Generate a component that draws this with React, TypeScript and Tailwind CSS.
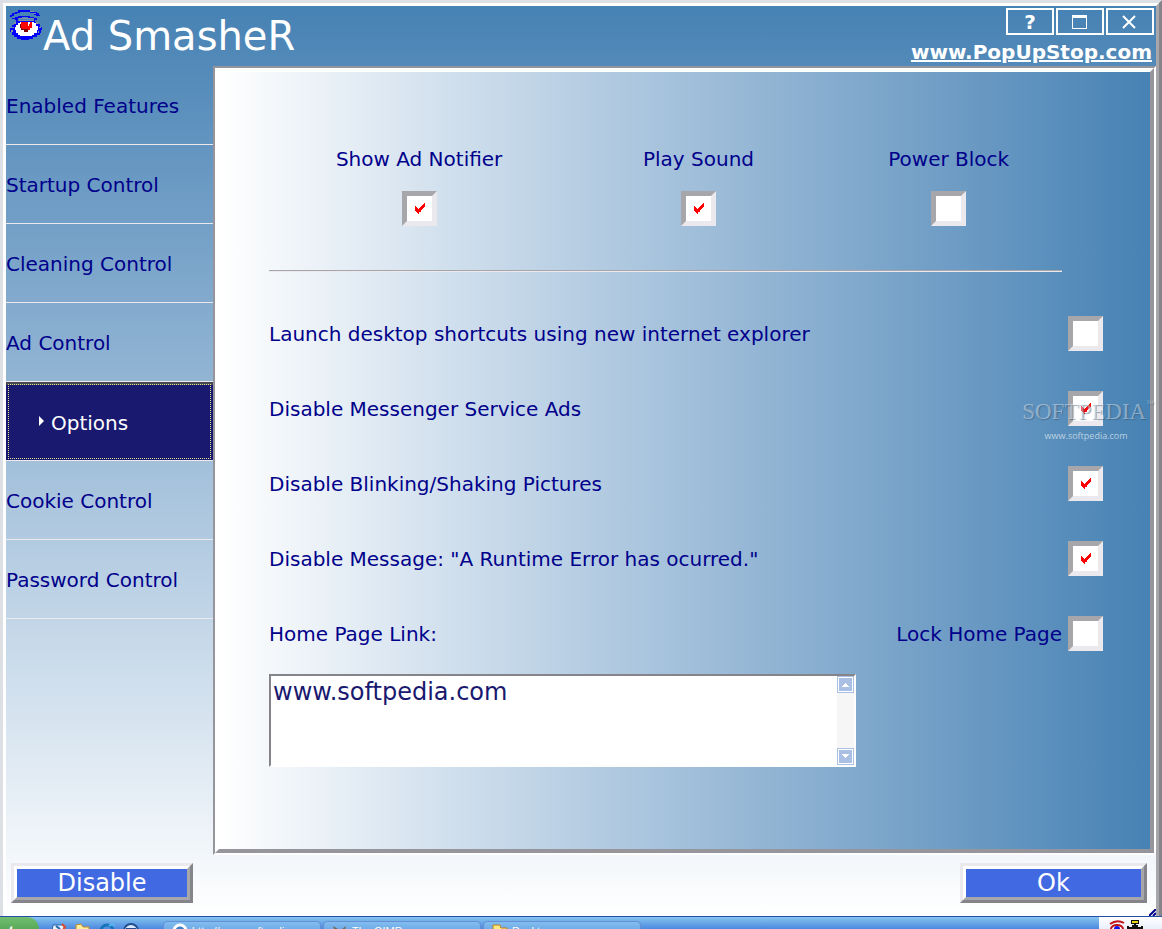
import { useState } from 'react';
import clsx from 'clsx';

const navItems = [
  'Enabled Features',
  'Startup Control',
  'Cleaning Control',
  'Ad Control',
  'Options',
  'Cookie Control',
  'Password Control',
];

function EyeLogo() {
  return (
    <svg className="h-8 w-8 shrink-0" viewBox="0 0 32 32" shapeRendering="crispEdges" aria-hidden="true">
      <path d="M0 5H2V3H5V2H8V0H20V1H24V2H27V3H29V5H30V6H26V5H24V3H20V2H10V3H7V4H4V6H2V7H0Z" fill="#0000ff" />
      <path d="M5 7H8V6H20V7H24V8H27V10H24V8H18V7H12V8H8V10H5V9H2V8H5Z" fill="#0000ff" />
      <path d="M20 1H24V2H20ZM24 3H26V4H24ZM9 8H24V9H9Z" fill="#8790a0" />
      <path d="M6 10H25V12H28V14H30V17H32V20H31V23H30V25H27V27H23V29H19V30H11V29H7V27H4V25H2V22H0V18H2V15H4V12H6Z" fill="#0000ff" />
      <path d="M8 10H24V11H8ZM4 12H6V14H4ZM2 17H4V18H2ZM1 20H3V22H1ZM26 12H28V14H26ZM29 17H31V18H29ZM28 21H29V23H28Z" fill="#8790a0" />
      <path d="M8 13H10V12H24V13H26V16H28V20H27V23H24V25H22V26H10V25H8V23H6V20H5V17H6V15H8Z" fill="#fff" />
      <path d="M10 14H12V18H14V20H18V22H14V20H11V18H10Z" fill="#800000" />
      <path d="M11 12H22V18H20V20H12V18H11Z" fill="#ff0000" />
      <path d="M12 19H18V22H14V20H12Z" fill="#800000" />
      <path d="M18 12H20V14H19V16H18Z" fill="#fff" />
    </svg>
  );
}

function TitleButtons() {
  const frame = 'flex h-[27px] w-12 items-center justify-center border-2 border-white text-white';
  return (
    <div className="flex gap-0.5">
      <button className={frame} aria-label="Help">
        <span className="text-[20px] leading-5 font-bold">?</span>
      </button>
      <button className={frame} aria-label="Maximize">
        <svg className="h-4 w-4" viewBox="0 0 16 16" shapeRendering="crispEdges">
          <path d="M0 1H15V15H0ZM1 4V14H14V4Z" fill="currentColor" fillRule="evenodd" />
        </svg>
      </button>
      <button className={frame} aria-label="Close">
        <svg className="h-4 w-4" viewBox="0 0 16 16">
          <path d="M1 2L13 14M13 2L1 14" stroke="currentColor" strokeWidth="2" />
        </svg>
      </button>
    </div>
  );
}

function CheckBox({ id, defaultChecked }: { id: string; defaultChecked?: boolean }) {
  return (
    <span className="grid size-[35px] shrink-0">
      <input
        id={id}
        type="checkbox"
        defaultChecked={defaultChecked}
        className="peer col-start-1 row-start-1 size-[35px] appearance-none border-5 border-t-[#a7a6aa] border-r-[#ece9ee] border-b-[#ece9ee] border-l-[#a7a6aa] bg-white"
      />
      <svg
        className="pointer-events-none invisible col-start-1 row-start-1 h-[11px] w-[11px] place-self-center peer-checked:visible"
        viewBox="0 0 11 11"
        shapeRendering="crispEdges"
      >
        <path d="M1 3H2V4H3V5H4V6H5V5H6V4H7V3H8V2H9V1H10V0H11V4H10V5H9V6H8V7H7V8H6V9H5V11H4V10H3V9H2V8H1Z" fill="#ff0000" />
        <path d="M5 6H7V9H5Z" fill="#ff0000" />
      </svg>
    </span>
  );
}

const toggles = [
  { id: 'notifier', label: 'Show Ad Notifier', checked: true, width: 'w-[36%]' },
  { id: 'sound', label: 'Play Sound', checked: true, width: 'w-[31%]' },
  { id: 'power', label: 'Power Block', checked: false, width: 'w-[29%]' },
];

const options = [
  { id: 'launch', label: 'Launch desktop shortcuts using new internet explorer', checked: false },
  { id: 'messenger', label: 'Disable Messenger Service Ads', checked: true },
  { id: 'blinking', label: 'Disable Blinking/Shaking Pictures', checked: true },
  { id: 'runtime', label: 'Disable Message: "A Runtime Error has ocurred."', checked: true },
];

function ScrollArrow({ down }: { down?: boolean }) {
  return (
    <button className="flex h-[17px] w-[17px] items-center justify-center border border-[#a9c0e4] bg-white p-px" aria-label={down ? 'Scroll down' : 'Scroll up'}>
      <svg className={clsx('h-full w-full bg-[#a9c0e4]', down && 'rotate-180')} viewBox="0 0 13 13" shapeRendering="crispEdges">
        <path d="M6 5H7V6H8V7H9V8H10V9H3V8H4V7H5V6H6Z" fill="#fff" />
      </svg>
    </button>
  );
}

function Watermark() {
  return (
    <div className="pointer-events-none absolute top-[332px] right-0 text-center text-white/40 select-none">
      <div className="flex items-start font-['Liberation_Serif',serif] text-[23px] leading-6 [text-shadow:1px_1px_1px_#33557088]">
        SOFTPEDIA<span className="text-[8px] leading-2">™</span>
      </div>
      <div className="pr-1 font-['Open_Sans',sans-serif] text-[9px] leading-6 text-white/60">www.softpedia.com</div>
    </div>
  );
}

function OptionsPanel() {
  return (
    <main className="relative flex-1 border-2 border-t-[#96959b] border-r-white border-b-white border-l-[#96959b] bg-white">
      <div className="h-full border-4 border-t-white border-r-[#96959b] border-b-[#96959b] border-l-white bg-linear-to-r from-white to-[#4682b4] pt-[73px] pr-[47px] pl-[50px] text-[#00008b]">
        <div className="flex">
          {toggles.map((t) => (
            <div key={t.id} className={clsx('flex flex-col items-center gap-[18px]', t.width)}>
              <label htmlFor={t.id} className="text-[20px] leading-7">{t.label}</label>
              <CheckBox id={t.id} defaultChecked={t.checked} />
            </div>
          ))}
        </div>
        <hr className="mt-11 mr-[41px] border-t border-b border-t-[#a7a6aa] border-b-[#ece9ee]" />
        <div className="flex flex-col gap-10 pt-11">
          {options.map((o) => (
            <div key={o.id} className="flex items-center justify-between">
              <label htmlFor={o.id} className="text-[20px] leading-7">{o.label}</label>
              <CheckBox id={o.id} defaultChecked={o.checked} />
            </div>
          ))}
          <div className="flex items-center justify-between">
            <label htmlFor="homepage" className="text-[20px] leading-7">Home Page Link:</label>
            <div className="flex items-center gap-1.5">
              <label htmlFor="lock" className="text-[20px] leading-7">Lock Home Page</label>
              <CheckBox id="lock" />
            </div>
          </div>
        </div>
        <div className="mt-[23px] flex h-[93px] w-[74%] max-w-[587px] border-2 border-t-[#85848a] border-r-white border-b-white border-l-[#85848a] bg-white">
          <textarea
            id="homepage"
            defaultValue="www.softpedia.com"
            className="flex-1 resize-none overflow-hidden px-0.5 text-2xl leading-8 text-[#191970] outline-none"
          />
          <div className="flex flex-col justify-between bg-[#f6f6f6]">
            <ScrollArrow />
            <ScrollArrow down />
          </div>
        </div>
      </div>
      <Watermark />
    </main>
  );
}

function ActionButton({ children, className }: { children: string; className: string }) {
  return (
    <button
      className={clsx(
        'h-10 border-3 border-t-[#ece9ee] border-r-[#85848a] border-b-[#85848a] border-l-[#ece9ee] text-2xl leading-7 text-white',
        className,
      )}
    >
      <span className="flex h-full items-center justify-center border-3 border-t-white border-r-[#a7a6aa] border-b-[#a7a6aa] border-l-white bg-[#4169e1]">
        {children}
      </span>
    </button>
  );
}

function TaskButton({ icon, children }: { icon: React.ReactNode; children: string }) {
  return (
    <button className="flex h-6 w-[158px] shrink-0 items-start gap-1 overflow-hidden rounded-t-sm border border-[#668fd6] bg-linear-to-b from-[#82beee] to-[#4c84dc] pt-px pl-2 text-left text-[11px] leading-4 text-white">
      {icon}
      <span className="truncate">{children}</span>
    </button>
  );
}

function TaskBar() {
  return (
    <footer className="h-[13px] overflow-hidden border-t border-[#244fa5] bg-linear-to-b from-[#86c4ef] to-[#4c88df]">
      <div className="flex h-8 items-start font-['Liberation_Sans',sans-serif]">
        <button className="h-8 w-[39px] shrink-0 overflow-hidden rounded-tr-xl bg-linear-to-b from-[#71bd71] to-[#2e8b2e] text-left text-lg leading-6 font-bold text-white italic">rt</button>
        <div className="flex w-[124px] gap-2 pt-1.5 pl-3">
          <svg className="h-4 w-4" viewBox="0 0 16 16"><path d="M2 2H13V14H0Z" fill="#e8f3ff" stroke="#2367a8" /><path d="M5 3L9 6" stroke="#2367a8" strokeWidth="2" /><path d="M11 1L14 4L9 11" stroke="#e04b28" strokeWidth="2" fill="none" /></svg>
          <svg className="h-4 w-4" viewBox="0 0 16 16"><path d="M1 2L6 1L8 4H14V14H1Z" fill="#fff0a0" stroke="#c48a25" /></svg>
          <svg className="h-4 w-4" viewBox="0 0 16 16"><circle cx="8" cy="8" r="6" fill="none" stroke="#1674b9" strokeWidth="3" /><path d="M10 3Q14 0 15 3" fill="none" stroke="#58b7ee" strokeWidth="2" /></svg>
          <svg className="h-4 w-4" viewBox="0 0 16 16"><circle cx="8" cy="8" r="7" fill="#d8eaff" stroke="#254e8c" strokeWidth="2" /><path d="M3 5H13V7H3Z" fill="#254e8c" /></svg>
        </div>
        <div className="flex flex-1 gap-0.5 pt-1">
          <TaskButton icon={<svg className="h-4 w-4" viewBox="0 0 16 16"><circle cx="8" cy="8" r="6" fill="#3b7fc8" stroke="#fff" strokeWidth="3" /></svg>}>http://www.softpedia...</TaskButton>
          <TaskButton icon={<svg className="h-4 w-4" viewBox="0 0 16 16"><path d="M1 3L6 6H10L14 3L12 12H4Z" fill="#706b60" /></svg>}>The GIMP</TaskButton>
          <TaskButton icon={<svg className="h-4 w-4" viewBox="0 0 16 16"><path d="M1 2H8L9 5H15V14H1Z" fill="#ffe981" stroke="#b9801c" /></svg>}>Desktop</TaskButton>
        </div>
        <div className="flex h-8 w-[63px] shrink-0 gap-0.5 bg-linear-to-b from-white to-[#c5d5f3] pt-[3px] pl-2.5">
          <svg className="h-4 w-4" viewBox="0 0 16 16"><path d="M1 4Q8-1 15 3" fill="none" stroke="#c0141a" strokeWidth="2" /><ellipse cx="8" cy="9" rx="6" ry="4" fill="#fff" stroke="#c0141a" strokeWidth="2" /><circle cx="8" cy="9" r="3" fill="#1010e0" /></svg>
          <svg className="h-4 w-4" viewBox="0 0 16 16" shapeRendering="crispEdges"><path d="M4 0H12V4H9V5H11V7H14V6H16V12H0V6H2V7H5V5H7V4H4Z" fill="#111" /><path d="M5 1H11V3H5Z" fill="#e8da12" /></svg>
        </div>
      </div>
    </footer>
  );
}

export default function App() {
  const [active, setActive] = useState('Options');

  return (
    <div className="flex min-h-screen flex-col bg-white font-['DejaVu_Sans',Verdana,sans-serif]">
      <div className="flex flex-1 flex-col border-t-3 border-r-3 border-l-3 border-t-[#dce0e4] border-r-[#85848a] border-l-[#dce0e4]">
        <div className="relative flex flex-1 flex-col border-t-3 border-r-3 border-l-3 border-t-white border-r-[#a7a6aa] border-l-white bg-linear-to-b from-[#4682b4] to-white">
          <header className="flex h-[60px] items-start justify-between">
            <div className="flex items-start gap-px pt-1 pl-1">
              <EyeLogo />
              <h1 className="text-[40px] leading-[52px] text-white">Ad SmasheR</h1>
            </div>
            <div className="flex flex-col items-end gap-[3px] pt-0.5 pr-0.5">
              <TitleButtons />
              <a href="#" className="pr-0.5 text-[20px] leading-7 font-bold text-white underline">www.PopUpStop.com</a>
            </div>
          </header>
          <div className="flex flex-1">
            <nav className="w-[207px] shrink-0">
              {navItems.map((item) => (
                <button
                  key={item}
                  onClick={() => setActive(item)}
                  className={clsx(
                    'flex h-[79px] w-full items-center border-b border-[#ece9ee] pt-px text-left text-[20px] leading-7',
                    item === active ? 'gap-1.5 border-t-3 border-t-[#484850] bg-[#191970] pl-[33px] text-white outline-1 -outline-offset-3 outline-dotted outline-[#e6e68f]' : 'text-[#00008b]',
                  )}
                >
                  {item === active && (
                    <svg className="h-3.5 w-1.5" viewBox="0 0 6 14">
                      <path d="M0 0L5 5L0 10Z" fill="currentColor" />
                    </svg>
                  )}
                  {item}
                </button>
              ))}
            </nav>
            <OptionsPanel />
          </div>
          <div className="flex justify-between pt-2 pr-[9px] pb-[13px] pl-[5px]">
            <ActionButton className="w-[182px]">Disable</ActionButton>
            <ActionButton className="w-[187px]">Ok</ActionButton>
          </div>
          <svg className="absolute right-0 bottom-0 h-[7px] w-[7px]" viewBox="0 0 7 7" aria-hidden="true">
            <path d="M0 7L7 0M4 7L7 4" stroke="#00008b" strokeWidth="2" />
          </svg>
        </div>
      </div>
      <TaskBar />
    </div>
  );
}
